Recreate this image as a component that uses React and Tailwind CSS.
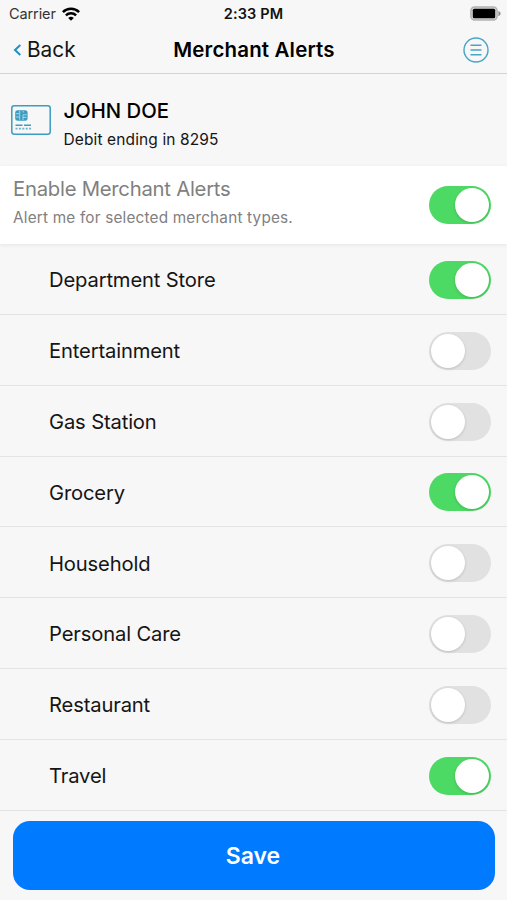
import { useState } from "react";

const initialMerchants = [
  { name: "Department Store", enabled: true },
  { name: "Entertainment", enabled: false },
  { name: "Gas Station", enabled: false },
  { name: "Grocery", enabled: true },
  { name: "Household", enabled: false },
  { name: "Personal Care", enabled: false },
  { name: "Restaurant", enabled: false },
  { name: "Travel", enabled: true },
];

const Toggle = ({ checked, onChange, label }) => (
  <button
    type="button"
    role="switch"
    aria-checked={checked}
    aria-label={label}
    onClick={onChange}
    className={`flex h-[38px] w-[62px] shrink-0 items-center rounded-full px-[2px] ${
      checked ? "justify-end bg-[#4cd964]" : "justify-start bg-[#e1e1e1]"
    }`}
  >
    <span className="h-[34px] w-[34px] rounded-full bg-white shadow-[0_1px_3px_rgba(0,0,0,0.16)]" />
  </button>
);

const WifiIcon = () => (
  <svg width="18" height="14" viewBox="0 0 18 14" fill="none" stroke="#000" strokeWidth="2.5">
    <path d="M0.9 5.1a11.5 11.5 0 0 1 16.2 0" />
    <path d="M3.9 8.4a7.3 7.3 0 0 1 10.2 0" />
    <path d="M9 13.8L6.2 11a4 4 0 0 1 5.6 0z" fill="#000" stroke="none" />
  </svg>
);

const BatteryIcon = () => (
  <svg width="31" height="15" viewBox="0 0 31 15">
    <rect x="0.9" y="0.9" width="26.2" height="13.2" rx="3.8" fill="#d5d5d5" stroke="#b3b3b3" strokeWidth="1.5" />
    <rect x="2.8" y="2.8" width="22.4" height="9.4" rx="1.5" fill="#000" />
    <path d="M28.4 4.9c3 .9 3 4.3 0 5.2z" fill="#8f8f8f" />
  </svg>
);

const MenuIcon = () => (
  <svg width="26" height="26" viewBox="0 0 26 26" fill="none" stroke="#4ba3c7" strokeWidth="1.4">
    <circle cx="13" cy="13" r="12" />
    <path d="M8 8.3h10M8 13h10M8 17.7h10" strokeLinecap="round" />
  </svg>
);

const CardIcon = () => (
  <svg width="40" height="30" viewBox="0 0 40 30" fill="none" stroke="#3c9dc2">
    <rect x="0.8" y="0.8" width="38.4" height="28.4" rx="2.4" strokeWidth="1.5" />
    <rect x="4.2" y="5.2" width="12.4" height="10.6" rx="2.4" fill="#3c9dc2" stroke="none" />
    <path d="M5 8.7h3.2M5 12h3.2M8.7 6v8.8M12 15V9.8h3.7M12.2 6v1.6M12 12.4h3.5" stroke="#d7ebf3" strokeWidth="0.7" />
    <path d="M4.5 20.2h7M13 20.2h7" strokeWidth="1.5" />
    <path d="M4.5 23.6h16" strokeWidth="1.6" strokeDasharray="2 1.4" opacity="0.75" />
  </svg>
);

const App = () => {
  const [allEnabled, setAllEnabled] = useState(true);
  const [merchants, setMerchants] = useState(initialMerchants);

  const toggleMerchant = (name) => {
    setMerchants((prev) =>
      prev.map((m) => (m.name === name ? { ...m, enabled: !m.enabled } : m))
    );
  };

  return (
    <div className="flex h-[900px] w-[507px] flex-col overflow-hidden bg-[#f7f7f7] font-['Inter',sans-serif] text-[#151515]">
      {/* Status bar */}
      <div className="grid h-[27px] shrink-0 grid-cols-3 items-center px-[6px]">
        <div className="flex items-center gap-[6px] pl-[3px] text-[14.5px] tracking-[-0.1px] text-[#333]">
          <span>Carrier</span>
          <WifiIcon />
        </div>
        <div className="text-center text-[14.5px] font-semibold tracking-[0.15px] text-[#111]">2:33 PM</div>
        <div className="flex justify-end">
          <BatteryIcon />
        </div>
      </div>

      {/* Navigation */}
      <header className="grid h-[47px] shrink-0 grid-cols-[1fr_auto_1fr] items-center border-b border-[#d4d4d4] pl-[13px] pr-[12px]">
        <button type="button" className="flex items-center gap-[5px] text-[20.8px]">
          <svg width="9" height="12" viewBox="0 0 9 12" fill="none" stroke="#2290c3" strokeWidth="2">
            <path d="M7.3 1L2 6l5.3 5" />
          </svg>
          Back
        </button>
        <h1 className="text-[20.5px] font-semibold tracking-[0.15px] text-black">Merchant Alerts</h1>
        <button type="button" aria-label="Menu" className="mr-[6px] justify-self-end">
          <MenuIcon />
        </button>
      </header>

      {/* Account */}
      <section className="flex h-[92px] shrink-0 items-center gap-[12.5px] pl-[11px]">
        <CardIcon />
        <div className="pt-[9px]">
          <h2 className="text-[20.3px] leading-[30px] font-medium text-black">JOHN DOE</h2>
          <p className="text-[15.5px] leading-[27px] tracking-[0.12px]">Debit ending in 8295</p>
        </div>
      </section>

      <section className="flex h-[78px] shrink-0 items-center justify-between bg-white pl-[13px] pr-[16px] shadow-[0_1px_4px_rgba(0,0,0,0.08)]">
        <div className="pb-[6px] text-[#808080]">
          <h3 className="text-[20.3px] leading-[30px] tracking-[-0.25px]">Enable Merchant Alerts</h3>
          <p className="text-[15.3px] leading-[27px] tracking-[0.2px]">Alert me for selected merchant types.</p>
        </div>
        <Toggle
          label="Enable Merchant Alerts"
          checked={allEnabled}
          onChange={() => setAllEnabled(!allEnabled)}
        />
      </section>

      {/* Merchant types */}
      <ul className="shrink-0">
        {merchants.map((merchant) => (
          <li
            key={merchant.name}
            className="flex h-[70.85px] items-center justify-between border-b border-[#e4e4e4] pt-[2px] pl-[49px] pr-[16px]"
          >
            <span className="pt-px text-[20.2px] tracking-[-0.15px]">{merchant.name}</span>
            <Toggle
              label={merchant.name}
              checked={merchant.enabled}
              onChange={() => toggleMerchant(merchant.name)}
            />
          </li>
        ))}
      </ul>

      <div className="pt-[10px] pr-[12px] pl-[13px]">
        <button
          type="button"
          className="h-[69px] w-full rounded-[17px] bg-[#007aff] pt-[2px] pr-[2px] text-[23px] font-semibold text-white"
        >
          Save
        </button>
      </div>
    </div>
  );
};

export default App;
